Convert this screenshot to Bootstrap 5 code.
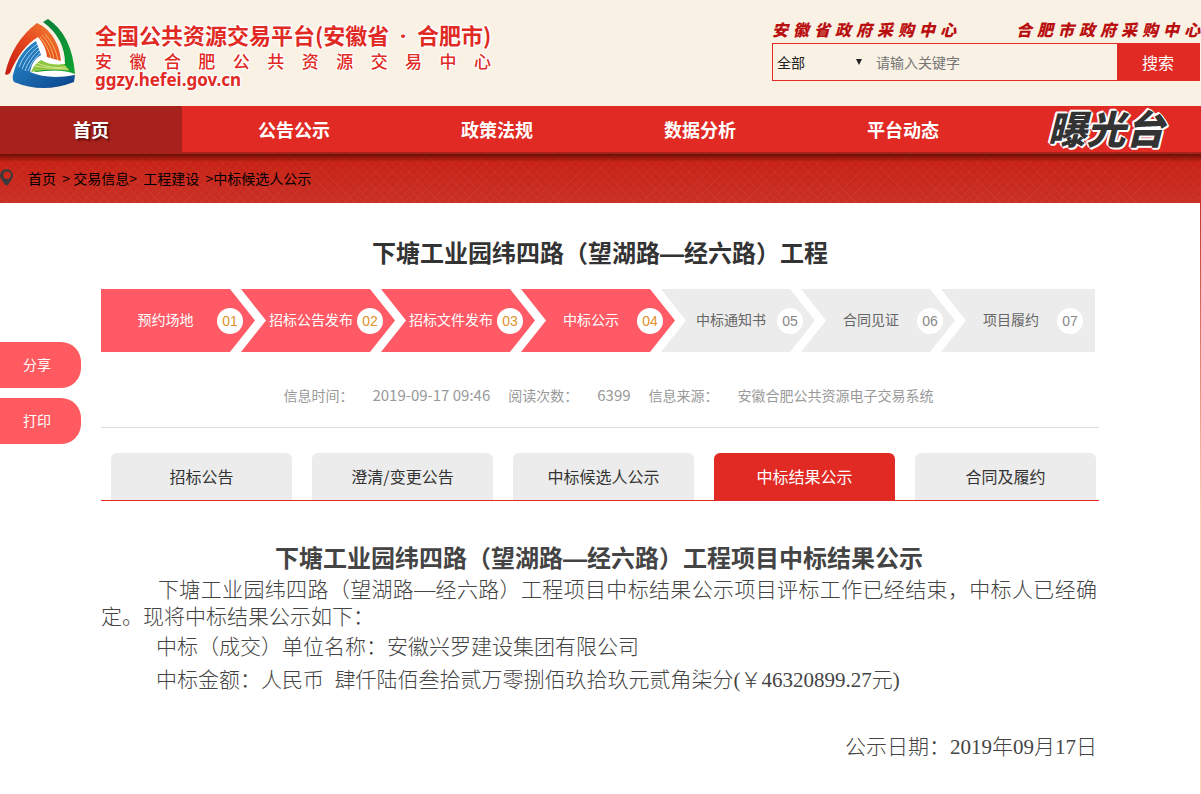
<!DOCTYPE html>
<html lang="zh-CN">
<head>
<meta charset="utf-8">
<meta name="viewport" content="width=device-width, initial-scale=1">
<title>下塘工业园纬四路工程项目中标结果公示</title>
<link href="https://cdn.jsdelivr.net/npm/bootstrap@5.3.0/dist/css/bootstrap.min.css" rel="stylesheet">
<style>
:root{--brand:#e12a24;--dark-red:#a8221d;--coral:#ff5a65;--grey:#ececec}
body{font-family:"Noto Sans CJK SC",sans-serif;font-size:14px;line-height:20px;color:#333;background:#fff linear-gradient(#c93026 200px,#fbd9b8 520px) no-repeat right top/1px 100%;min-height:100vh}
a{color:inherit;text-decoration:none}
.site-head{background:#f9f1e4;height:106px}
.logo{margin-top:18px}
.brand-text{width:396px;padding-top:20px;color:var(--brand);font-weight:700;white-space:nowrap;text-shadow:1px 1px 1px #fff,-1px -1px 1px #fff,1px -1px 1px #fff,-1px 1px 1px #fff,0 0 4px #fff}
.brand-name{font-size:22px;line-height:28px}
.brand-name .dot{font-family:"Noto Sans",sans-serif;padding:0 5px}
.brand-sub,.centre-link{text-align:justify;text-align-last:justify}
.brand-sub{font-size:17px;font-weight:500;line-height:24px}
.brand-url{font:700 17px/14px "Noto Sans",sans-serif}
.head-tools{width:429px;padding:17px 1px 0 0}
.centre-link{width:184px;font-size:16px;font-style:italic;font-weight:900;line-height:24px;color:#b90f0f}
.search-box{height:38px;margin-top:2px;border:1px solid var(--brand)}
.search-box select{width:98px;appearance:none;border:0;padding:0 4px;color:#222;background:transparent url("data:image/svg+xml,%3Csvg xmlns='http://www.w3.org/2000/svg' width='6' height='6'%3E%3Cpath d='M0 0h6L3 6z' fill='%23222'/%3E%3C/svg%3E") no-repeat 83px 15px}
.search-box input{min-width:0;border:0;background:transparent;padding:0 5px}
.search-box button{width:82px;border:0;background:var(--brand);color:#fff;font-size:16px}
.main-nav{display:grid;grid-template-columns:repeat(6,1fr);column-gap:21px;height:48px;background:var(--brand);border-bottom:2px solid var(--dark-red);padding-right:4px}
.main-nav a{color:#fff;font-size:18px;font-weight:700;line-height:46px;height:46px;text-align:center;white-space:nowrap}
.main-nav .home{background:var(--dark-red);text-shadow:2px 2px 2px #5a0d0a}
.main-nav .expose{font-size:39px;font-style:italic;font-weight:900;line-height:42px;color:#333;text-shadow:1px 0 #fff,-1px 0 #fff,0 1px #fff,0 -1px #fff,2px 1px #fff,-2px -1px #fff,1px 2px #fff,-1px -2px #fff}
.crumbs{height:49px;padding-bottom:2px;gap:14px;color:#000;background:
 linear-gradient(#6b0f08,#8e150c00 8px),
 repeating-linear-gradient(45deg,#0000 0 5px,#ffffff08 5px 6px),
 repeating-linear-gradient(-45deg,#0000 0 5px,#ffffff08 5px 6px),
 linear-gradient(#c81f12,#c93026)}
.wrap{max-width:998px;margin:0 101px}
.title{font-family:"Liberation Sans","Noto Sans CJK SC",sans-serif;font-size:24px;font-weight:700;line-height:36px;margin:0;text-align:center}
.page-title{padding:33px 0 17px}
.steps{height:63px;padding-right:4px}
.step{flex:1 1 0;min-width:0;margin-right:-14px;padding-right:12px;background:var(--grey);color:#666;clip-path:polygon(0 0,calc(100% - 25px) 0,100% 50%,calc(100% - 25px) 100%,0 100%,25px 50%)}
.step.done{background:var(--coral);color:#fff}
.step:first-child{clip-path:polygon(0 0,calc(100% - 25px) 0,100% 50%,calc(100% - 25px) 100%,0 100%)}
.step:last-child{margin-right:0;clip-path:polygon(0 0,100% 0,100% 100%,0 100%,25px 50%)}
.step .label-text{padding:0 0 4px 24px}
.step:first-child .label-text{padding-left:13px}
.step .num{flex:none;width:26px;height:26px;line-height:26px;background:#fff;color:#888;font-family:"Liberation Sans",sans-serif}
.step.done .num{color:#e0902a}
.meta{color:#999;padding:33px 0 22px 17px;border-bottom:1px solid #ddd;column-gap:18px}
.meta dt{font-weight:400;width:71px}
.meta .figure-text{font-size:15px}
.tabs{margin-top:25px;padding:0 3px 0 10px;gap:20px;border-bottom:1px solid #e12a24}
.tabs a{flex:1 1 0;height:47px;line-height:47px;font-size:16px;text-align:center;background:var(--grey);border-radius:6px 6px 0 0;white-space:nowrap}
.tabs a.active{background:var(--brand);color:#fff}
.notice{color:#444;font-family:"Liberation Serif","Noto Sans CJK SC",serif;font-size:21px;font-weight:300;line-height:27px;padding-right:2px}
.notice p{margin:0}
.notice .title{padding-top:40px}
.lead-in{text-indent:57px;text-align:justify}
.entry{padding:3px 0 3px 55px}
.notice .date{padding-top:37px}
.side{position:absolute;left:0;top:342px;gap:10px}
.side button{width:81px;height:46px;border:0;border-radius:0 20px 20px 0;background:#ff5a60;color:#fff;text-align:left;padding:0 0 2px 23px}
</style>
</head>
<body>
<header class="site-head d-flex justify-content-between">
  <a href="#" class="d-flex">
    <svg class="logo ms-1 me-3" width="75" height="72" viewBox="0 0 75 72" aria-hidden="true">
      <defs>
        <linearGradient id="r" x1="0" y1="1" x2="1" y2="0"><stop stop-color="#c51a13"/><stop offset=".55" stop-color="#e84a20"/><stop offset="1" stop-color="#ef8a35"/></linearGradient>
        <linearGradient id="g" x1="0" y1="0" x2="1" y2="1"><stop stop-color="#0a7a3c"/><stop offset="1" stop-color="#10a331"/></linearGradient>
        <linearGradient id="b" x1="0" y1="0" x2="1" y2="1"><stop stop-color="#2b8fd0"/><stop offset="1" stop-color="#0b438b"/></linearGradient>
      </defs>
      <path d="M10 50Q19 30 32 20L52 22L60 44L70 60L40 64L8 60Z" fill="#fff"/>
      <path d="M1 56Q8 24 33 5Q45 10 52 24Q56 32 57 43L43 39Q42 28 34 19Q17 29 6 55Q3 58 1 56Z" fill="url(#r)"/>
      <path d="M38 17Q47 26 50 40M36 19Q44 28 47 40M41 16Q51 27 54 42" fill="none" stroke="#f6b45a"/>
      <path d="M39 4L44 1Q68 17 71 56Q58 50 31 54L34 45Q48 49 61 46Q61 20 39 4Z" fill="url(#g)"/>
      <path d="M27 54Q31 45 37 42Q47 48 60 46L66 53Q48 50 27 54Z" fill="#8cc63f"/>
      <path d="M33 45Q47 51 62 49M31 48Q46 51 64 51" fill="none" stroke="#d8e58b"/>
      <path d="M9 57Q14 34 32 23L37 37Q28 42 26 54Q44 62 71 57L70 64Q39 76 10 64Q8 61 9 57Z" fill="url(#b)"/>
      <path d="M15 49Q20 35 33 26M18 51Q23 38 34 29M21 53Q25 41 35 32M24 53Q27 43 36 35" fill="none" stroke="#9fd0ee"/>
    </svg>
    <span class="brand-text d-block">
      <span class="brand-name d-block">全国公共资源交易平台(安徽省<span class="dot"> · </span>合肥市)</span>
      <span class="brand-sub d-block">安徽合肥公共资源交易中心</span>
      <span class="brand-url d-block">ggzy.hefei.gov.cn</span>
    </span>
  </a>
  <div class="head-tools">
    <div class="d-flex justify-content-between">
      <a href="#" class="centre-link">安徽省政府采购中心</a>
      <a href="#" class="centre-link">合肥市政府采购中心</a>
    </div>
    <form class="search-box d-flex">
      <select aria-label="搜索范围"><option>全部</option></select>
      <input class="flex-grow-1" type="text" placeholder="请输入关键字" aria-label="关键字">
      <button type="button">搜索</button>
    </form>
  </div>
</header>
<nav class="main-nav">
  <a href="#" class="home">首页</a>
  <a href="#">公告公示</a>
  <a href="#">政策法规</a>
  <a href="#">数据分析</a>
  <a href="#">平台动态</a>
  <a href="#" class="expose">曝光台</a>
</nav>
<div class="crumbs d-flex align-items-center">
  <svg width="14" height="17" viewBox="0 0 14 17" aria-hidden="true"><path fill-rule="evenodd" d="M6.500 0A6.500 6.500 0 0 0 0 6.500Q0 10 6.500 17Q13 10 13 6.500A6.500 6.500 0 0 0 6.500 0ZM6.500 2.500A3.800 3.800 0 1 1 6.500 10A3.800 3.800 0 0 1 6.500 2.500Z" fill="#3a3a3a"/></svg>
  <span class="text-nowrap"><a href="#">首页</a>&nbsp; &gt; <a href="#">交易信息</a>&gt;&nbsp; <a href="#">工程建设</a> &nbsp;&gt;<a href="#">中标候选人公示</a></span>
</div>
<main class="wrap">
  <h1 class="title page-title">下塘工业园纬四路（望湖路—经六路）工程</h1>
  <div class="steps d-flex text-center text-nowrap">
    <div class="step done d-flex align-items-center"><span class="label-text flex-grow-1">预约场地</span><span class="num rounded-circle">01</span></div>
    <div class="step done d-flex align-items-center"><span class="label-text flex-grow-1">招标公告发布</span><span class="num rounded-circle">02</span></div>
    <div class="step done d-flex align-items-center"><span class="label-text flex-grow-1">招标文件发布</span><span class="num rounded-circle">03</span></div>
    <div class="step done d-flex align-items-center"><span class="label-text flex-grow-1">中标公示</span><span class="num rounded-circle">04</span></div>
    <div class="step d-flex align-items-center"><span class="label-text flex-grow-1">中标通知书</span><span class="num rounded-circle">05</span></div>
    <div class="step d-flex align-items-center"><span class="label-text flex-grow-1">合同见证</span><span class="num rounded-circle">06</span></div>
    <div class="step d-flex align-items-center"><span class="label-text flex-grow-1">项目履约</span><span class="num rounded-circle">07</span></div>
  </div>
  <dl class="meta d-flex justify-content-center text-nowrap mb-0">
    <dt>信息时间：</dt><dd class="figure-text mb-0">2019-09-17 09:46</dd>
    <dt>阅读次数：</dt><dd class="figure-text mb-0">6399</dd>
    <dt>信息来源：</dt><dd class="mb-0">安徽合肥公共资源电子交易系统</dd>
  </dl>
  <nav class="tabs d-flex">
    <a href="#">招标公告</a>
    <a href="#">澄清/变更公告</a>
    <a href="#">中标候选人公示</a>
    <a href="#" class="active">中标结果公示</a>
    <a href="#">合同及履约</a>
  </nav>
  <article class="notice">
    <h2 class="title">下塘工业园纬四路（望湖路—经六路）工程项目中标结果公示</h2>
    <p class="lead-in">下塘工业园纬四路（望湖路—经六路）工程项目中标结果公示项目评标工作已经结束，中标人已经确定。现将中标结果公示如下：</p>
    <p class="entry">中标（成交）单位名称：安徽兴罗建设集团有限公司</p>
    <p class="entry">中标金额：人民币&nbsp; 肆仟陆佰叁拾贰万零捌佰玖拾玖元贰角柒分(￥46320899.27元)</p>
    <p class="date text-end">公示日期：2019年09月17日</p>
  </article>
</main>
<aside class="side d-flex flex-column">
  <button type="button">分享</button>
  <button type="button">打印</button>
</aside>
<script src="https://cdn.jsdelivr.net/npm/bootstrap@5.3.0/dist/js/bootstrap.bundle.min.js"></script>
</body>
</html>
